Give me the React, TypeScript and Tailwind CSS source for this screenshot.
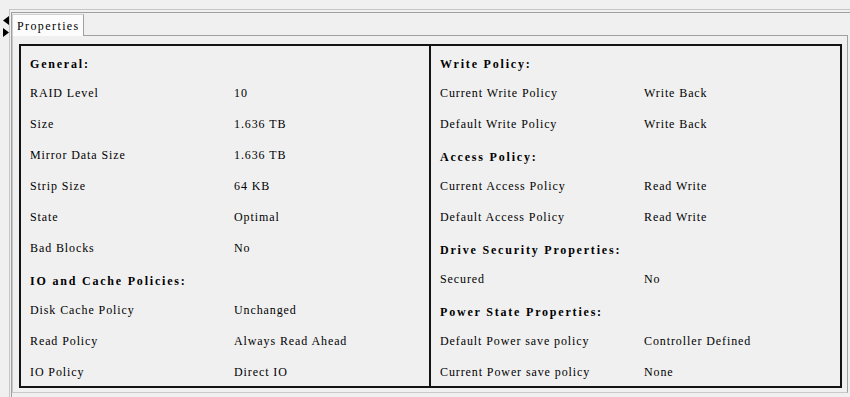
import React from 'react'

type Row = { h: string } | [string, string]

const left: Row[] = [
  { h: 'General:' },
  ['RAID Level', '10'],
  ['Size', '1.636 TB'],
  ['Mirror Data Size', '1.636 TB'],
  ['Strip Size', '64 KB'],
  ['State', 'Optimal'],
  ['Bad Blocks', 'No'],
  { h: 'IO and Cache Policies:' },
  ['Disk Cache Policy', 'Unchanged'],
  ['Read Policy', 'Always Read Ahead'],
  ['IO Policy', 'Direct IO'],
]

const right: Row[] = [
  { h: 'Write Policy:' },
  ['Current Write Policy', 'Write Back'],
  ['Default Write Policy', 'Write Back'],
  { h: 'Access Policy:' },
  ['Current Access Policy', 'Read Write'],
  ['Default Access Policy', 'Read Write'],
  { h: 'Drive Security Properties:' },
  ['Secured', 'No'],
  { h: 'Power State Properties:' },
  ['Default Power save policy', 'Controller Defined'],
  ['Current Power save policy', 'None'],
]

function Column({ rows, className }: { rows: Row[]; className?: string }) {
  return (
    <div className={'flex flex-col pl-[9px] ' + (className ?? '')}>
      {rows.map((r, i) =>
        Array.isArray(r) ? (
          <div key={i} className="flex h-[31px] shrink-0 items-center whitespace-pre">
            <span className="w-[204px] shrink-0">{r[0]}</span>
            <span>{r[1]}</span>
          </div>
        ) : (
          <div key={i} className="flex h-[31px] shrink-0 items-center pt-[4px] font-bold tracking-[1.8px] whitespace-pre">
            {r.h}
          </div>
        )
      )}
    </div>
  )
}

export default function App() {
  return (
    <div className="flex h-[397px] w-[850px] overflow-hidden bg-[#f0f0f0] font-[family-name:Liberation_Serif,serif] text-[12px] leading-none tracking-[0.9px] text-black">
      {/* splitter arrows */}
      <div className="flex w-[9px] shrink-0 flex-col gap-[3px] pl-[3px] pt-[16px]">
        <svg width="6" height="9" viewBox="0 0 6 9">
          <polygon points="6,0 6,9 0,4.5" fill="#000" />
        </svg>
        <svg width="6" height="9" viewBox="0 0 6 9">
          <polygon points="0,0 0,9 6,4.5" fill="#000" />
        </svg>
      </div>

      <div className="flex-1 pt-[9px]">
        <div className="h-full border-l border-t border-[#c6c6c6] pl-[1px] pt-[2px]">
          <div className="h-full border-l border-t border-[#a0a0a0] pt-[1px]">
            {/* tab strip */}
            <div className="flex h-[22px]">
              <div className="flex w-[72px] items-center border-l border-r border-t border-l-[#d0d0d0] border-r-[#a0a0a0] border-t-[#d0d0d0] bg-[#fcfcfc] pl-[4px] tracking-[1.4px]">
                Properties
              </div>
              <div className="mr-[2px] flex-1 border-b border-[#a0a0a0]" />
            </div>

            {/* tab panel */}
            <div className="mr-[2px] h-[357px] border-b border-l border-r border-b-[#c8c8c8] border-l-[#c8c8c8] border-r-[#a0a0a0] pl-[6px] pt-[8px]">
              <div className="flex h-[344px] w-[823px] overflow-hidden border-2 border-[#141414]">
                <Column rows={left} className="w-[410px] border-r-2 border-[#141414]" />
                <Column rows={right} className="flex-1" />
              </div>
            </div>
          </div>
        </div>
      </div>
    </div>
  )
}
